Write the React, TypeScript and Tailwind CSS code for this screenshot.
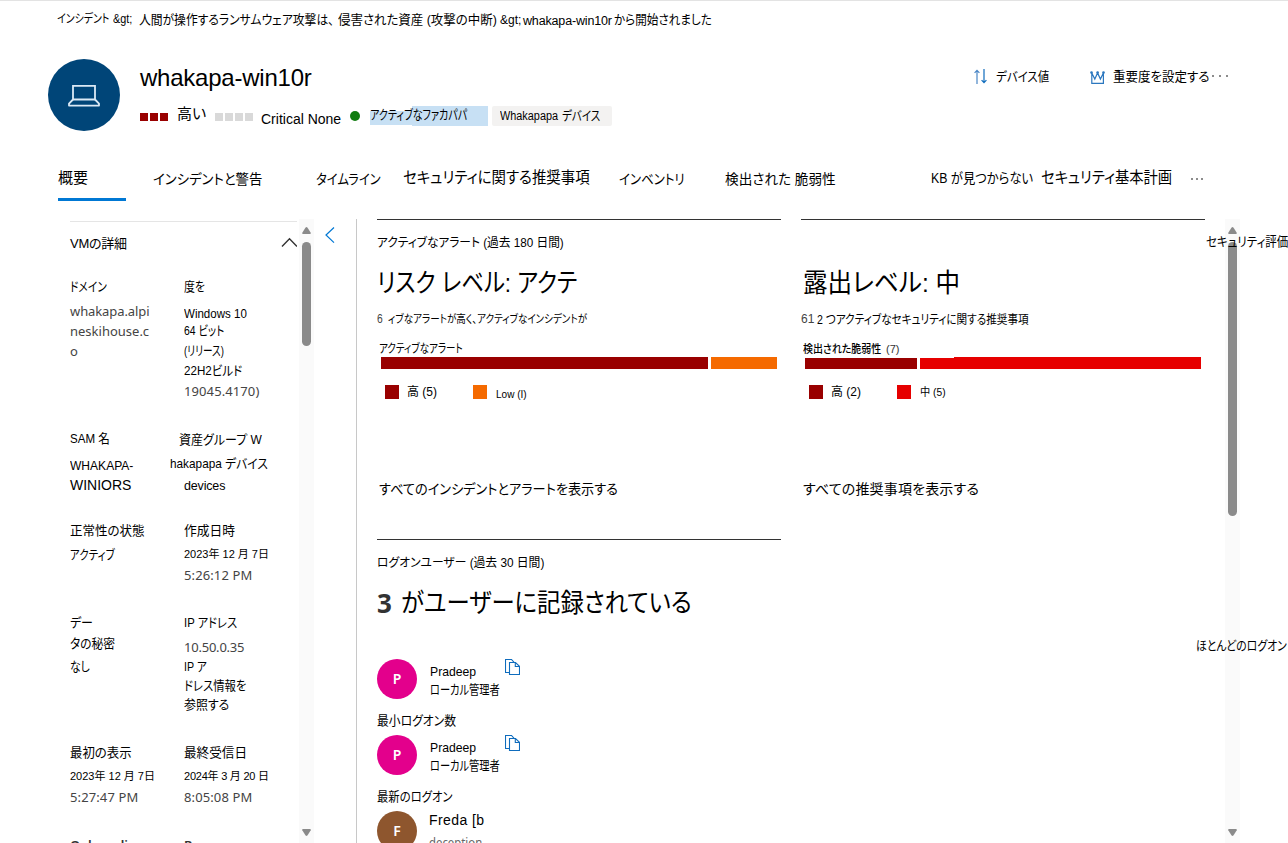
import { useLayoutEffect, useRef, useState } from "react";
import type { ReactNode } from "react";
import { twMerge } from "tailwind-merge";

type LabelProps = {
  w: number;
  children: string;
  className?: string;
};

// One line of text fitted to a width: tracked when there is room, condensed when it is tight
const Label = ({ w, children, className }: LabelProps) => {
  const ref = useRef<HTMLSpanElement>(null);
  const [fit, setFit] = useState({ spacing: 0, scale: 1 });

  useLayoutEffect(() => {
    if (!ref.current) return;
    const natural = ref.current.offsetWidth - fit.spacing * children.length;
    const spacing = (w - natural) / Math.max(children.length - 1, 1);
    if (spacing < -0.25) {
      setFit({ spacing: 0, scale: w / natural });
    } else {
      setFit({ spacing, scale: 1 });
    }
  }, [w, children]);

  return (
    <span
      className={twMerge("block h-4 shrink-0 whitespace-nowrap text-[13px] leading-4", className)}
      style={{ width: w }}
    >
      <span
        ref={ref}
        className="inline-block origin-left"
        style={{
          letterSpacing: fit.spacing,
          transform: fit.scale === 1 ? undefined : `scaleX(${fit.scale})`,
        }}
      >
        {children}
      </span>
    </span>
  );
};

const segoe = "font-['Noto_Sans','Noto_Sans_CJK_JP',sans-serif] text-[#444444]";

const Tab = ({ w, children, className }: LabelProps) => (
  <Label w={w} className={twMerge("h-5 text-[14px] leading-5", className)}>
    {children}
  </Label>
);

const LaptopIcon = () => (
  <svg width="32" height="24" viewBox="0 0 32 24" fill="none" stroke="#dbe9f5" strokeWidth="1.8">
    <path d="M5 2.9h22v13.6H5z" />
    <path d="M5 16.5 1 20.6V22.6H31V20.6L27 16.5" strokeLinejoin="round" />
  </svg>
);

const SortIcon = () => (
  <svg width="14" height="15" viewBox="0 0 14 15" fill="none" strokeWidth="1.2">
    <path d="M3 15V1.5M.6 3.8 3 1.4l2.4 2.4" stroke="#4a86c5" />
    <path d="M10 0v13.5M7.6 11.2l2.4 2.4 2.4-2.4" stroke="#0f6cbd" />
  </svg>
);

const CrownIcon = () => (
  <svg width="15" height="13" viewBox="0 0 15 13" fill="none" stroke="#2b77bf" strokeWidth="1.2">
    <path d="M1.8 2v10.3h11.6V2L10.4 8 7.6 2 4.8 8z" />
    <g fill="#2b77bf" stroke="none">
      <circle cx="1.5" cy="1.6" r="1.3" />
      <circle cx="7.6" cy="1.6" r="1.3" />
      <circle cx="13.5" cy="1.6" r="1.3" />
    </g>
  </svg>
);

const CopyIcon = () => (
  <svg width="15" height="17" viewBox="0 0 15 17" fill="none" stroke="#0f6cbd" strokeWidth="1.1">
    <path d="M4.5 13.5h-4V.5h6l2.6 2.8" />
    <path d="M4.5 3.5h6l4 3.9v8.1h-10z" fill="#fff" />
    <path d="M10.3 3.7v3.8h4" />
  </svg>
);

const Dots = ({ className }: { className: string }) => (
  <div className={twMerge("flex", className)}>
    <i className="size-0.5 rounded-full bg-[#666666]" />
    <i className="size-0.5 rounded-full bg-[#666666]" />
    <i className="size-0.5 rounded-full bg-[#666666]" />
  </div>
);

const Scrollbar = ({ children }: { children: ReactNode }) => (
  <div className="flex h-full w-[15px] shrink-0 flex-col items-center bg-[#fafafa] pt-2 pb-[7px]">
    <svg width="9" height="7" viewBox="0 0 10 7" preserveAspectRatio="none" className="mb-2 shrink-0" fill="#8a8a8a">
      <path d="M4 .5Q5-.4 6 .5L9.7 5.8Q9.9 7 9 7H1Q0 7 .3 5.8z" />
    </svg>
    {children}
    <svg width="9" height="7" viewBox="0 0 10 7" preserveAspectRatio="none" className="mt-auto shrink-0" fill="#8a8a8a">
      <path d="M4 6.5Q5 7.4 6 6.5L9.7 1.2Q9.9 0 9 0H1Q0 0 .3 1.2z" />
    </svg>
  </div>
);

const Avatar = ({ letter, className }: { letter: string; className: string }) => (
  <div
    className={twMerge(
      "flex size-10 shrink-0 items-center justify-center rounded-full font-['Noto_Sans',sans-serif] text-sm font-semibold text-white",
      className
    )}
  >
    {letter}
  </div>
);

const LocalAdmin = () => (
  <div className="flex h-10">
    <Avatar letter="P" className="bg-[#e3008c]" />
    <div className="ml-[13px] w-[75px] pt-[5px]">
      <Label w={46}>Pradeep</Label>
      <Label w={70} className="mt-0.5">ローカル管理者</Label>
    </div>
    <CopyIcon />
  </div>
);

const DetailsPanel = () => (
  <div className="flex h-full w-[239px] shrink-0 flex-col overflow-hidden pt-0.5 pl-3">
    <div className="flex h-[34px] w-[228px] shrink-0 justify-between border-t border-[#e5e5e5] pt-[13px]">
      <Label w={57} className="mt-px">VMの詳細</Label>
      <svg width="17" height="11" viewBox="0 0 17 11" fill="none" stroke="#333" strokeWidth="1.4" className="mt-0.5">
        <path d="m1 9.5 7.5-7.7L16 9.5" />
      </svg>
    </div>

    <div className="mt-[23px] grid h-[153px] shrink-0 grid-cols-[114px_113px]">
      <div>
        <Label w={37} className="mt-px">ドメイン</Label>
        <Label w={80} className={`${segoe} mt-2`}>whakapa.alpi</Label>
        <Label w={79} className={`${segoe} mt-1`}>neskihouse.c</Label>
        <Label w={8} className={`${segoe} mt-1`}>o</Label>
      </div>
      <div>
        <Label w={21} className="mt-px">度を</Label>
        <Label w={63} className="mt-[11px]">Windows 10</Label>
        <Label w={40} className="mt-px">64 ビット</Label>
        <Label w={40} className="mt-1">(リリース)</Label>
        <Label w={58} className="mt-1">22H2ビルド</Label>
        <Label w={75} className={`${segoe} mt-1`}>19045.4170)</Label>
      </div>
    </div>

    <div className="grid h-[91px] shrink-0 grid-cols-[100px_127px]">
      <div>
        <Label w={40}>SAM 名</Label>
        <Label w={63} className="mt-[11px]">WHAKAPA-</Label>
        <Label w={61} className="mt-[3px] text-sm leading-4">WINIORS</Label>
      </div>
      <div>
        <Label w={83} className="mt-px ml-[9px]">資産グループ W</Label>
        <Label w={98} className="mt-2">hakapapa デバイス</Label>
        <Label w={41} className="mt-[5px] ml-3.5 text-[12.5px]">devices</Label>
      </div>
    </div>

    <div className="grid h-[92px] shrink-0 grid-cols-[114px_113px]">
      <div>
        <Label w={75} className="mt-px">正常性の状態</Label>
        <Label w={45} className="mt-2">アクティブ</Label>
      </div>
      <div>
        <Label w={51} className="mt-px">作成日時</Label>
        <Label w={85} className="mt-[7px] text-[11px]">2023年 12 月 7日</Label>
        <Label w={68} className={`${segoe} mt-[5px]`}>5:26:12 PM</Label>
      </div>
    </div>

    <div className="grid h-[130px] shrink-0 grid-cols-[114px_113px]">
      <div>
        <Label w={23} className="mt-px">デー</Label>
        <Label w={45} className="mt-[5px]">タの秘密</Label>
        <Label w={20} className="mt-[7px]">なし</Label>
      </div>
      <div>
        <Label w={53} className="mt-px">IP アドレス</Label>
        <Label w={61} className={`${segoe} mt-2`}>10.50.0.35</Label>
        <Label w={23} className="mt-1">IP ア</Label>
        <Label w={62} className="mt-[3px]">ドレス情報を</Label>
        <Label w={45} className="mt-[3px]">参照する</Label>
      </div>
    </div>

    <div className="grid h-[93px] shrink-0 grid-cols-[114px_113px]">
      <div>
        <Label w={62} className="mt-px">最初の表示</Label>
        <Label w={85} className="mt-[7px] text-[11px]">2023年 12 月 7日</Label>
        <Label w={68} className={`${segoe} mt-[5px]`}>5:27:47 PM</Label>
      </div>
      <div>
        <Label w={63} className="mt-px">最終受信日</Label>
        <Label w={85} className="mt-[7px] text-[11px]">2024年 3 月 20 日</Label>
        <Label w={68} className={`${segoe} mt-[5px]`}>8:05:08 PM</Label>
      </div>
    </div>

    <div className="grid shrink-0 grid-cols-[114px_113px]">
      <Label w={74} className={`${segoe} font-semibold text-[#333333]`}>Onboarding</Label>
      <Label w={60} className={`${segoe} font-semibold text-[#333333]`}>Resource</Label>
    </div>
  </div>
);

const AlertsCard = () => (
  <div className="h-80 w-[404px] shrink-0 border-t border-[#333333] pt-3.5">
    <Label w={187} className="text-[12.5px]">アクティブなアラート (過去 180 日間)</Label>
    <Label w={200} className="mt-[17px] h-8 text-[26px] leading-8">リスク レベル: アクテ</Label>
    <div className="mt-3 flex gap-[5px]">
      <Label w={6} className="text-xs leading-4 text-[#444444]">6</Label>
      <Label w={199} className="text-[11.5px]">ィブなアラートが高く、アクティブなインシデントが</Label>
    </div>
    <Label w={84} className="mt-3.5 ml-0.5 text-xs leading-4">アクティブなアラート</Label>
    <div className="ml-1 flex h-3 w-[396px] gap-[3px]">
      <div className="w-[327px] bg-[#990000]" />
      <div className="flex-1 bg-[#f56a00]" />
    </div>
    <div className="mt-4 ml-2 flex h-3.5 items-center">
      <div className="size-3.5 bg-[#990000]" />
      <Label w={30} className="mr-9 ml-2 text-xs leading-4">高 (5)</Label>
      <div className="size-3.5 bg-[#f56a00]" />
      <Label w={31} className="mt-1 ml-[9px] text-[11px]">Low (I)</Label>
    </div>
    <Label w={239} className="mt-[82px] ml-0.5 text-sm leading-4">すべてのインシデントとアラートを表示する</Label>
  </div>
);

const ExposureCard = () => (
  <div className="h-80 w-[404px] shrink-0 border-t border-[#333333] pt-[47px]">
    <Label w={157} className="ml-0.5 h-8 text-[26px] leading-8">露出レベル: 中</Label>
    <div className="mt-3 flex">
      <Label w={13} className="mr-[3px] text-xs leading-4 text-[#444444]">61</Label>
      <Label w={212} className="text-[12.5px]">2 つアクティブなセキュリティに関する推奨事項</Label>
    </div>
    <div className="mt-3.5 ml-0.5 flex gap-[5px]">
      <Label w={78} className="text-[11px] font-medium">検出された脆弱性</Label>
      <Label w={13} className="text-[11px] text-[#333333]">(7)</Label>
    </div>
    <div className="ml-1 flex h-3 w-[396px] gap-[3px]">
      <div className="mt-px w-28 bg-[#990000]" />
      <div className="flex flex-1">
        <div className="mt-px w-[34px] bg-[#e60000]" />
        <div className="flex-1 bg-[#e60000]" />
      </div>
    </div>
    <div className="mt-4 ml-2 flex h-3.5 items-center">
      <div className="size-3.5 bg-[#990000]" />
      <Label w={30} className="mr-9 ml-2 text-xs leading-4">高 (2)</Label>
      <div className="size-3.5 bg-[#e60000]" />
      <Label w={26} className="ml-[9px] text-[11px]">中 (5)</Label>
    </div>
    <Label w={176} className="mt-[82px] ml-0.5 text-sm leading-4">すべての推奨事項を表示する</Label>
  </div>
);

const UsersCard = () => (
  <div className="w-[404px] border-t border-[#333333] pt-3.5">
    <Label w={167} className="text-[12.5px]">ログオンユーザー (過去 30 日間)</Label>
    <div className="mt-[17px] flex gap-[9px]">
      <Label w={15} className={`${segoe} h-8 text-[26px] leading-8 font-bold text-[#333333]`}>3</Label>
      <Label w={291} className="h-8 text-[26px] leading-8">がユーザーに記録されている</Label>
    </div>
    <div className="mt-10">
      <LocalAdmin />
      <Label w={79} className="mt-3.5 mb-1.5">最小ログオン数</Label>
      <LocalAdmin />
      <Label w={76} className="mt-3.5 mb-1.5">最新のログオン</Label>
      <div className="flex">
        <Avatar letter="F" className="bg-[#8e562e]" />
        <div className="ml-3 pt-px">
          <Label w={55} className="text-sm leading-4">Freda [b</Label>
          <Label w={53} className={`${segoe} mt-[7px] text-xs leading-4 text-[#666666]`}>deception</Label>
        </div>
      </div>
    </div>
  </div>
);

const App = () => {
  return (
    <div className="flex h-[843px] w-[1288px] flex-col overflow-hidden border-t border-[#e3e3e3] bg-white font-['Liberation_Sans','Noto_Sans_CJK_JP',sans-serif] text-black [font-feature-settings:'palt']">
      {/* Breadcrumb */}
      <div className="flex h-[26px] shrink-0 pt-[11px] pl-[57px]">
        <Label w={52} className="mr-1 -mt-px text-xs leading-4">インシデント</Label>
        <Label w={19} className="mr-[7px] -mt-px text-xs leading-4">&amp;gt;</Label>
        <Label w={195} className="mr-1">人間が操作するランサムウェア攻撃は、</Label>
        <Label w={159} className="mr-[3px]">侵害された資産 (攻撃の中断)</Label>
        <Label w={21} className="mr-0.5 text-xs leading-4">&amp;gt;</Label>
        <Label w={89} className="mr-0.5 text-[12.5px]">whakapa-win10r</Label>
        <Label w={98}>から開始されました</Label>
      </div>

      {/* Device header */}
      <div className="mt-8 flex h-[72px] shrink-0 pl-12">
        <div className="flex size-[72px] shrink-0 items-center justify-center rounded-full bg-[#004578]">
          <LaptopIcon />
        </div>
        <div className="ml-5 w-[834px] pt-[3px]">
          <Label w={172} className="h-8 text-2xl leading-8">whakapa-win10r</Label>
          <div className="mt-3 flex h-5">
            <div className="mt-[7px] flex w-[37px] gap-0.5">
              <i className="size-2 bg-[#990000]" />
              <i className="size-2 bg-[#990000]" />
              <i className="size-2 bg-[#990000]" />
            </div>
            <Label w={29} className="text-[15px] leading-4">高い</Label>
            <div className="mt-[7px] ml-[9px] flex w-[46px] gap-0.5">
              <i className="size-2 bg-[#d9d9d9]" />
              <i className="size-2 bg-[#d9d9d9]" />
              <i className="size-2 bg-[#d9d9d9]" />
              <i className="size-2 bg-[#d9d9d9]" />
            </div>
            <Label w={80} className="mt-[5px] text-sm leading-4">Critical None</Label>
            <i className="mt-[5px] ml-[9px] size-2.5 rounded-full bg-[#107c10]" />
            <div className="ml-2.5 flex h-5 w-[118px] bg-[linear-gradient(#c7e0f4,#c7e0f4),linear-gradient(#c7e0f4,#c7e0f4)] bg-[size:42px_14px,76px_20px] bg-[position:0_5px,42px_0] bg-no-repeat pt-px">
              <Label w={97}>アクティブなファカパパ</Label>
            </div>
            <div className="ml-1 flex h-5 w-[120px] gap-1 rounded-xs bg-[#f3f2f1] pt-0.5 pl-2">
              <Label w={58} className="text-xs leading-4">Whakapapa</Label>
              <Label w={38}>デバイス</Label>
            </div>
          </div>
        </div>
        <div className="flex pt-2.5">
          <div className="w-[22px]">
            <SortIcon />
          </div>
          <Label w={53} className="mr-[41px]">デバイス値</Label>
          <div className="w-[23px] pt-0.5">
            <CrownIcon />
          </div>
          <Label w={96} className="mr-[3px]">重要度を設定する</Label>
          <Dots className="mt-1.5 gap-[5px]" />
        </div>
      </div>

      {/* Tabs */}
      <div className="mt-[37px] flex h-[33px] shrink-0 pl-[58px]">
        <div className="w-[95px]">
          <Tab w={30} className="text-[15px] leading-5">概要</Tab>
          <div className="mt-2.5 h-[3px] w-[68px] bg-[#0078d4]" />
        </div>
        <Tab w={109} className="mt-px mr-[54px]">インシデントと警告</Tab>
        <Tab w={65} className="mt-px mr-[22px]">タイムライン</Tab>
        <Tab w={187} className="mr-[29px] text-[15.5px] leading-5">セキュリティに関する推奨事項</Tab>
        <Tab w={66} className="mt-px mr-10">インベントリ</Tab>
        <Tab w={111} className="mt-px mr-[95px]">検出された 脆弱性</Tab>
        <Tab w={102} className="mr-2">KB が見つからない</Tab>
        <Tab w={131} className="mr-[19px] text-[15.5px] leading-5">セキュリティ基本計画</Tab>
        <Dots className="mt-2.5 gap-[3px]" />
      </div>

      {/* Body */}
      <div className="relative mt-[18px] flex min-h-0 flex-1 pl-[58px]">
        <DetailsPanel />
        <div className="ml-0.5">
          <Scrollbar>
            <div className="h-[104px] w-[9px] rounded-full bg-[#8a8a8a]" />
          </Scrollbar>
        </div>
        <div className="w-[43px] shrink-0 border-r border-[#c8c8c8] pt-2 pl-[11px]">
          <svg width="10" height="17" viewBox="0 0 10 17" fill="none" stroke="#0078d4" strokeWidth="1.2">
            <path d="M9 .5 1 8l8 7.6" />
          </svg>
        </div>
        <div className="ml-5 w-[848px] shrink-0 overflow-hidden">
          <div className="flex gap-5">
            <AlertsCard />
            <ExposureCard />
          </div>
          <UsersCard />
        </div>
        <Scrollbar>
          <div className="h-[274px] w-[9px] rounded-full bg-[#8a8a8a]" />
        </Scrollbar>
        {/* Headings of the cards that run off the right edge */}
        <Label w={82} className="absolute top-[15px] right-0">セキュリティ評価</Label>
        <Label w={91} className="absolute top-[419px] right-px">ほとんどのログオン</Label>
      </div>
    </div>
  );
};

export default App;
